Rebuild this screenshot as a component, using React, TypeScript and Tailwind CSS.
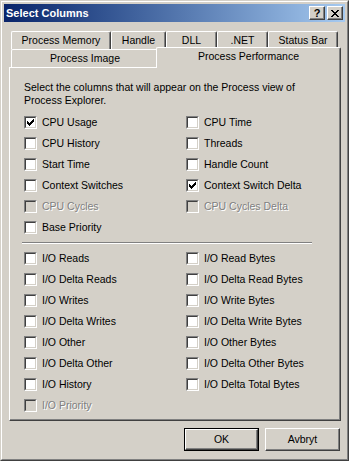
import React from 'react';

type Item = { label: string; checked?: boolean; disabled?: boolean } | null;

const cpuRows: [Item, Item][] = [
  [{ label: 'CPU Usage', checked: true }, { label: 'CPU Time' }],
  [{ label: 'CPU History' }, { label: 'Threads' }],
  [{ label: 'Start Time' }, { label: 'Handle Count' }],
  [{ label: 'Context Switches' }, { label: 'Context Switch Delta', checked: true }],
  [{ label: 'CPU Cycles', disabled: true }, { label: 'CPU Cycles Delta', disabled: true }],
  [{ label: 'Base Priority' }, null]
];

const ioRows: [Item, Item][] = [
  [{ label: 'I/O Reads' }, { label: 'I/O Read Bytes' }],
  [{ label: 'I/O Delta Reads' }, { label: 'I/O Delta Read Bytes' }],
  [{ label: 'I/O Writes' }, { label: 'I/O Write Bytes' }],
  [{ label: 'I/O Delta Writes' }, { label: 'I/O Delta Write Bytes' }],
  [{ label: 'I/O Other' }, { label: 'I/O Other Bytes' }],
  [{ label: 'I/O Delta Other' }, { label: 'I/O Delta Other Bytes' }],
  [{ label: 'I/O History' }, { label: 'I/O Delta Total Bytes' }],
  [{ label: 'I/O Priority', disabled: true }, null]
];

function CheckBox({ checked, disabled }: { checked?: boolean; disabled?: boolean }) {
  return (
    <span className="block w-[13px] h-[13px] shrink-0 border border-t-[#808080] border-l-[#808080] border-b-white border-r-white">
      <span
        className={`flex items-center justify-center w-full h-full border border-t-[#404040] border-l-[#404040] border-b-[#d4d0c8] border-r-[#d4d0c8] ${
          disabled ? 'bg-[#d4d0c8]' : 'bg-white'
        }`}
      >
        {checked && (
          <svg width="7" height="7" viewBox="0 0 7 7" shapeRendering="crispEdges">
            <path
              d="M0 2h1v3H0z M1 3h1v3H1z M2 4h1v3H2z M3 3h1v3H3z M4 2h1v3H4z M5 1h1v3H5z M6 0h1v3H6z"
              fill={disabled ? '#808080' : '#000'}
            />
          </svg>
        )}
      </span>
    </span>
  );
}

function Option({ item }: { item: Item }) {
  if (!item) return <div />;
  return (
    <div className="flex items-center gap-[5px] h-[21px]">
      <CheckBox checked={item.checked} disabled={item.disabled} />
      <span
        className={
          item.disabled ? 'text-[#808080] [text-shadow:1px_1px_0_#fff]' : 'text-black'
        }
      >
        {item.label}
      </span>
    </div>
  );
}

function Tab({ label, w }: { label: string; w: string }) {
  return (
    <div
      className={`${w} h-[18px] flex items-center justify-center border-t border-l border-r border-t-white border-l-white border-r-[#404040] shadow-[inset_-1px_0_0_#808080] rounded-tl-[2px] rounded-tr-[2px] pb-[1px]`}
    >
      {label}
    </div>
  );
}

function TitleButton({ children }: { children: React.ReactNode }) {
  return (
    <div className="w-[16px] h-[14px] bg-[#d4d0c8] border border-t-white border-l-white border-b-[#404040] border-r-[#404040] shadow-[inset_-1px_-1px_0_#808080] flex items-center justify-center">
      {children}
    </div>
  );
}

function Button({ label, isDefault }: { label: string; isDefault?: boolean }) {
  if (isDefault) {
    return (
      <div className="w-[75px] h-[23px] border border-black">
        <div className="w-full h-full flex items-center justify-center border border-t-white border-l-white border-b-[#404040] border-r-[#404040] shadow-[inset_-1px_-1px_0_#808080]">
          {label}
        </div>
      </div>
    );
  }
  return (
    <div className="w-[75px] h-[23px] flex items-center justify-center border border-t-white border-l-white border-b-[#404040] border-r-[#404040] shadow-[inset_-1px_-1px_0_#808080]">
      {label}
    </div>
  );
}

export default function App() {
  return (
    <div className="w-[349px] h-[461px] bg-[#d4d0c8] border border-t-[#d4d0c8] border-l-[#d4d0c8] border-b-[#404040] border-r-[#404040] font-['Liberation_Sans',Arial,sans-serif] text-[10.5px] leading-[13px] text-black overflow-hidden">
      <div className="w-full h-full border border-t-white border-l-white border-b-[#808080] border-r-[#808080] p-[2px] flex flex-col">
        {/* Title bar */}
        <div className="h-[18px] flex items-center justify-between bg-gradient-to-r from-[#0a246a] to-[#a6caf0] pl-[2px] pr-[2px]">
          <span className="text-white font-bold text-[11px]">Select Columns</span>
          <div className="flex gap-[2px]">
            <TitleButton>
              <span className="font-bold text-[11px] leading-[11px] text-black">?</span>
            </TitleButton>
            <TitleButton>
              <svg width="8" height="7" viewBox="0 0 8 7" shapeRendering="crispEdges">
                <path
                  d="M0 0h2v1H0z M6 0h2v1H6z M1 1h2v1H1z M5 1h2v1H5z M2 2h4v1H2z M3 3h2v1H3z M2 4h4v1H2z M1 5h2v1H1z M5 5h2v1H5z M0 6h2v1H0z M6 6h2v1H6z"
                  fill="#000"
                />
              </svg>
            </TitleButton>
          </div>
        </div>

        {/* Client area */}
        <div className="flex flex-col pl-[5px] pr-[4px]">
          {/* Tabs - back row */}
          <div className="flex h-[18px] pl-[2px] mt-[9px]">
            <Tab label="Process Memory" w="w-[100px]" />
            <Tab label="Handle" w="w-[55px]" />
            <Tab label="DLL" w="w-[51px]" />
            <Tab label=".NET" w="w-[51px]" />
            <Tab label="Status Bar" w="w-[70px]" />
          </div>
          {/* Tabs - front row */}
          <div className="flex items-end h-[18px] pl-[2px]">
            <div className="w-[147px] h-[18px] flex items-center justify-center border-t border-l border-t-white border-l-white rounded-tl-[2px]">
              Process Image
            </div>
            <div className="relative z-10 ml-[-2px] mb-[-1px] w-[185px] h-[21px] bg-[#d4d0c8] flex items-center justify-center border-t border-l border-r border-t-white border-l-white border-r-[#404040] shadow-[inset_-1px_0_0_#808080] rounded-tl-[2px] rounded-tr-[2px] pb-[3px]">
              Process Performance
            </div>
          </div>

          {/* Panel */}
          <div className="border border-t-white border-l-white border-b-[#404040] border-r-[#404040] shadow-[inset_-1px_-1px_0_#808080] pt-[13px] pb-[4px] pl-[14px] pr-[14px]">
            <p>
              Select the columns that will appear on the Process view of
              <br />
              Process Explorer.
            </p>
            <div className="grid grid-cols-[162px_1fr] mt-[5px]">
              {cpuRows.map((row, i) => (
                <React.Fragment key={i}>
                  <Option item={row[0]} />
                  <Option item={row[1]} />
                </React.Fragment>
              ))}
            </div>
            <div className="my-[4px] ml-[-2px] w-[290px] h-[2px] border-t border-b border-t-[#808080] border-b-white" />
            <div className="grid grid-cols-[162px_1fr]">
              {ioRows.map((row, i) => (
                <React.Fragment key={i}>
                  <Option item={row[0]} />
                  <Option item={row[1]} />
                </React.Fragment>
              ))}
            </div>
          </div>

          {/* Buttons */}
          <div className="flex justify-end gap-[6px] mt-[7px] pr-[1px]">
            <Button label="OK" isDefault />
            <Button label="Avbryt" />
          </div>
        </div>
      </div>
    </div>
  );
}
